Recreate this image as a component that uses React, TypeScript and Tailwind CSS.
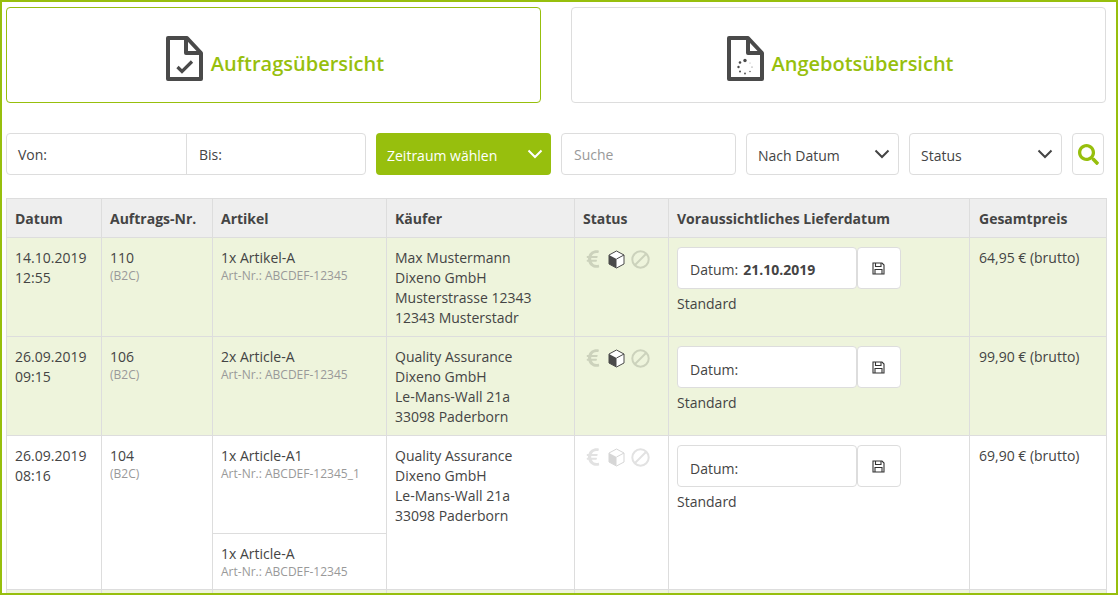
import React from "react";
import { FaEuroSign, FaSearch } from "react-icons/fa";

const Chevron = ({ color = "#444" }: { color?: string }) => (
  <svg width="16" height="10" viewBox="0 0 16 10" fill="none" stroke={color} strokeWidth="2">
    <path d="M1.5 1.5 L8 8 L14.5 1.5" />
  </svg>
);

const DocCheck = () => (
  <svg width="37" height="45" viewBox="0 0 37 45" fill="none">
    <path d="M2 2 H21 L35 17 V43 H2 Z" stroke="#4a4a4a" strokeWidth="4" strokeLinejoin="round" />
    <path d="M20 2 V17 H35" stroke="#4a4a4a" strokeWidth="4" strokeLinejoin="round" />
    <path d="M11.5 31 L16 35.5 L26 25.5" stroke="#4a4a4a" strokeWidth="3.2" />
  </svg>
);

const DocLoad = () => (
  <svg width="37" height="45" viewBox="0 0 37 45" fill="none">
    <path d="M2 2 H21 L35 17 V43 H2 Z" stroke="#4a4a4a" strokeWidth="4" strokeLinejoin="round" />
    <path d="M21 2 V17 H35" stroke="#4a4a4a" strokeWidth="4" strokeLinejoin="round" />
    <g fill="#4a4a4a">
      <circle cx="18" cy="24.5" r="1.7" />
      <circle cx="13" cy="26.5" r="1.3" />
      <circle cx="11.5" cy="31" r="1.2" />
      <circle cx="13" cy="35.5" r="1" />
      <circle cx="18" cy="37.5" r="0.9" />
      <circle cx="23" cy="35.5" r="0.7" />
      <circle cx="25" cy="31" r="0.5" />
      <circle cx="23" cy="27" r="0.4" />
    </g>
  </svg>
);

const Cube = ({ faded }: { faded?: boolean }) => (
  <svg width="17" height="19" viewBox="0 0 17 19" opacity={faded ? 0.22 : 1}>
    <path d="M8.5 1 L16 5 V14 L8.5 18 L1 14 V5 Z" fill="#fff" stroke="#4a4a4a" strokeWidth="1" />
    <path d="M1 5 L8.5 9 V18 L1 14 Z" fill="#4a4a4a" />
    <path d="M8.5 9 L16 5" stroke="#4a4a4a" strokeWidth="1" />
  </svg>
);

const Ban = ({ color }: { color: string }) => (
  <svg width="19" height="19" viewBox="0 0 19 19" fill="none" stroke={color} strokeWidth="2">
    <circle cx="9.5" cy="9.5" r="8.2" />
    <path d="M4 15 L15 4" />
  </svg>
);

const Floppy = () => (
  <svg width="13" height="13" viewBox="0 0 13 13" fill="none" stroke="#333" strokeWidth="1.1">
    <path d="M1 1 H10 L12 3 V12 H1 Z" />
    <path d="M3.5 1 V4.5 H9 V1" />
    <path d="M3 12 V7.5 H10 V12" />
  </svg>
);

const StatusIcons = ({ faded }: { faded?: boolean }) => {
  const c = faded ? "#e2e2e2" : "#ccd2bc";
  return (
    <div className="flex items-center ml-[-3px] mt-[1px] h-[20px]">
      <div className="w-[25px] flex justify-start">
        <FaEuroSign size={20} color={c} />
      </div>
      <Cube faded={faded} />
      <div className="ml-[6px]">
        <Ban color={c} />
      </div>
    </div>
  );
};

const DateCell = ({ date }: { date?: string }) => (
  <div className="mt-[-1px]">
    <div className="flex">
      <div
        className={
          date
            ? "w-[180px] h-[42px] bg-white border border-[#dddddd] rounded-[4px] flex items-center pl-[12px] pt-[3px]"
            : "w-[180px] h-[42px] bg-white border border-[#dddddd] rounded-[4px] flex items-center pl-[12px] pt-[5px]"
        }
      >
        <span>Datum:</span>
        {date && <b className="ml-[5px] font-bold">{date}</b>}
      </div>
      <div className="w-[44px] h-[42px] bg-white border border-[#dddddd] rounded-[4px] flex items-center justify-center pr-[2px]">
        <Floppy />
      </div>
    </div>
    <div className="mt-[5px]">Standard</div>
  </div>
);

const Art = ({ name, nr }: { name: string; nr: string }) => (
  <>
    <div className="leading-[20px]">{name}</div>
    <div className="text-[12px] leading-[16px] text-[#999999]">Art-Nr.: {nr}</div>
  </>
);

const td = "border border-[#dddddd] align-top px-[8px] pt-[10px] pb-[8px] leading-[20px]";
const tdPrice = "border border-[#dddddd] align-top pl-[9px] pr-[4px] pt-[10px] pb-[8px] leading-[20px]";
const tdStatus = "border border-[#dddddd] align-top px-[11px] pt-[10px] pb-[8px] leading-[20px]";

const Lines = ({ l }: { l: string[] }) => (
  <>
    {l.map((s) => (
      <div key={s}>{s}</div>
    ))}
  </>
);

const No = ({ n }: { n: string }) => (
  <>
    <div>{n}</div>
    <div className="text-[12px] leading-[16px] text-[#999999]">(B2C)</div>
  </>
);

export default function App() {
  return (
    <div className="w-[1118px] h-[595px] overflow-hidden border-2 border-[#97bf0d] bg-white text-[14px] text-[#444444] font-['Open_Sans',sans-serif] pl-[4px] pt-[5px]">
      <div className="flex gap-[30px]">
        <div className="w-[535px] h-[96px] rounded-[4px] border border-[#97bf0d] flex items-center justify-center gap-[8px] pt-[7px] pl-[3px]">
          <DocCheck />
          <span className="text-[20px] font-semibold text-[#97bf0d] mt-[10px]">Auftragsübersicht</span>
        </div>
        <div className="w-[535px] h-[96px] rounded-[4px] border border-[#dddddd] flex items-center justify-center gap-[7px] pt-[7px] pl-[4px]">
          <DocLoad />
          <span className="text-[20px] font-semibold text-[#97bf0d] mt-[10px]">Angebotsübersicht</span>
        </div>
      </div>

      <div className="flex gap-[10px] mt-[30px] h-[42px]">
        <div className="w-[360px] flex border border-[#dddddd] rounded-[4px]">
          <div className="w-[180px] border-r border-[#dddddd] pl-[11px] flex items-center">Von:</div>
          <div className="flex-1 pl-[12px] flex items-center">Bis:</div>
        </div>
        <div className="w-[175px] bg-[#97bf0d] rounded-[4px] text-white flex items-center justify-between pl-[11px] pr-[8px]">
          <span className="mt-[2px]">Zeitraum wählen</span>
          <Chevron color="#fff" />
        </div>
        <div className="w-[175px] border border-[#dddddd] rounded-[4px] flex items-center pl-[12px] text-[#999999]">Suche</div>
        <div className="w-[153px] border border-[#dddddd] rounded-[4px] flex items-center justify-between pl-[11px] pr-[8px]">
          <span className="mt-[2px]">Nach Datum</span>
          <Chevron />
        </div>
        <div className="w-[153px] border border-[#dddddd] rounded-[4px] flex items-center justify-between pl-[11px] pr-[8px]">
          <span className="mt-[2px]">Status</span>
          <Chevron />
        </div>
        <div className="w-[32px] border border-[#dddddd] rounded-[4px] flex items-center justify-center">
          <FaSearch size={21} color="#97bf0d" />
        </div>
      </div>

      <table className="mt-[23px] w-[1100px] table-fixed border-collapse">
        <colgroup>
          <col className="w-[95px]" />
          <col className="w-[111px]" />
          <col className="w-[174px]" />
          <col className="w-[188px]" />
          <col className="w-[94px]" />
          <col className="w-[301px]" />
          <col className="w-[137px]" />
        </colgroup>
        <thead>
          <tr className="bg-[#eeeeee] h-[39px]">
            {["Datum", "Auftrags-Nr.", "Artikel", "Käufer", "Status", "Voraussichtliches Lieferdatum"].map((h) => (
              <th key={h} className="border border-[#dddddd] text-left font-bold px-[8px] align-middle">
                {h}
              </th>
            ))}
            <th className="border border-[#dddddd] text-left font-bold pl-[9px] pr-[4px] align-middle">Gesamtpreis</th>
          </tr>
        </thead>
        <tbody>
          <tr className="bg-[#eef4dc] h-[99px]">
            <td className={td}><Lines l={["14.10.2019", "12:55"]} /></td>
            <td className={td}><No n="110" /></td>
            <td className={td}><Art name="1x Artikel-A" nr="ABCDEF-12345" /></td>
            <td className={td}><Lines l={["Max Mustermann", "Dixeno GmbH", "Musterstrasse 12343", "12343 Musterstadr"]} /></td>
            <td className={tdStatus}><StatusIcons /></td>
            <td className={td}><DateCell date="21.10.2019" /></td>
            <td className={tdPrice}>64,95 € (brutto)</td>
          </tr>
          <tr className="bg-[#eef4dc] h-[99px]">
            <td className={td}><Lines l={["26.09.2019", "09:15"]} /></td>
            <td className={td}><No n="106" /></td>
            <td className={td}><Art name="2x Article-A" nr="ABCDEF-12345" /></td>
            <td className={td}><Lines l={["Quality Assurance", "Dixeno GmbH", "Le-Mans-Wall 21a", "33098 Paderborn"]} /></td>
            <td className={tdStatus}><StatusIcons /></td>
            <td className={td}><DateCell /></td>
            <td className={tdPrice}>99,90 € (brutto)</td>
          </tr>
          <tr className="h-[98px]">
            <td rowSpan={2} className={td}><Lines l={["26.09.2019", "08:16"]} /></td>
            <td rowSpan={2} className={td}><No n="104" /></td>
            <td className={td}><Art name="1x Article-A1" nr="ABCDEF-12345_1" /></td>
            <td rowSpan={2} className={td}><Lines l={["Quality Assurance", "Dixeno GmbH", "Le-Mans-Wall 21a", "33098 Paderborn"]} /></td>
            <td rowSpan={2} className={tdStatus}><StatusIcons faded /></td>
            <td rowSpan={2} className={td}><DateCell /></td>
            <td rowSpan={2} className={tdPrice}>69,90 € (brutto)</td>
          </tr>
          <tr className="h-[56px]">
            <td className={td}><Art name="1x Article-A" nr="ABCDEF-12345" /></td>
          </tr>
          <tr className="bg-[#eef4dc] h-[99px]">
            <td className={td}></td>
            <td className={td}></td>
            <td className={td}></td>
            <td className={td}></td>
            <td className={td}></td>
            <td className={td}></td>
            <td className={td}></td>
          </tr>
        </tbody>
      </table>
    </div>
  );
}
